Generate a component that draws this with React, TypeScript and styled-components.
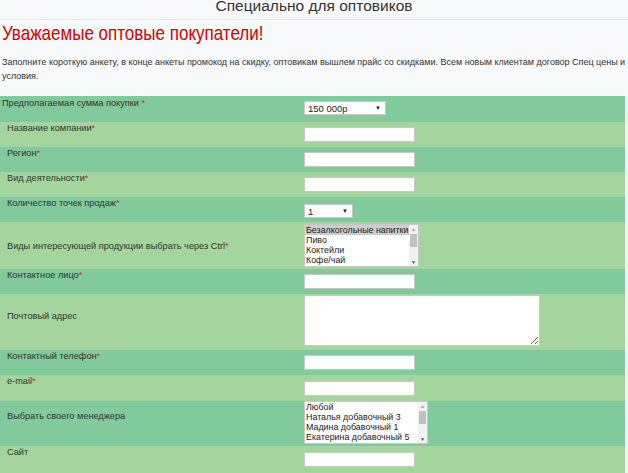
import React from 'react';
import styled, { createGlobalStyle } from 'styled-components';

const GlobalStyle = createGlobalStyle`
  html, body {
    margin: 0;
    padding: 0;
    background: #f8f9fa;
    font-family: 'Liberation Sans', Arial, sans-serif;
    color: #333;
    overflow: hidden;
  }
`;

const Page = styled.div`
  width: 628px;
  height: 473px;
  overflow: hidden;
`;

const TopBar = styled.div`
  height: 19px;
  border-bottom: 1px solid #e6e8ea;
  text-align: center;
  overflow: hidden;
`;

const TopTitle = styled.div`
  margin-top: -2px;
  font-size: 15.5px;
  line-height: 16px;
  color: #333;
`;

// narrow red headline, squeezed like the reference's condensed face
const Heading = styled.h1`
  margin: 1px 0 0 2px;
  font-size: 21px;
  line-height: 24px;
  font-weight: normal;
  color: #d40000;
  white-space: nowrap;
  transform: scaleX(0.81);
  transform-origin: left center;
`;

const Intro = styled.p`
  margin: 10px 0 0 2px;
  font-size: 9px;
  line-height: 14px;
  color: #333;
`;

const FormTable = styled.div`
  margin-top: 13px;
  width: 625px;
  display: flex;
  flex-direction: column;
`;

const Row = styled.div<{ $tone: 'dark' | 'light'; $h: number }>`
  height: ${(p) => p.$h}px;
  display: grid;
  grid-template-columns: 304px 1fr;
  background: ${(p) => (p.$tone === 'dark' ? '#80ca9c' : '#a3d59c')};
`;

const Label = styled.div<{ $top?: number; $indent: number }>`
  padding: ${(p) => p.$top ?? 0}px 0 0 ${(p) => p.$indent}px;
  font-size: 9.2px;
  line-height: 12px;
  color: #333;
`;

const Star = styled.span`
  color: #e02020;
`;

const Field = styled.div<{ $top: number }>`
  padding-top: ${(p) => p.$top}px;
  min-width: 0;
`;

const TextInput = styled.input`
  display: block;
  box-sizing: border-box;
  width: 111px;
  height: 15px;
  margin: 0;
  padding: 0 2px;
  border: 1px solid #c8c8c8;
  background: #fff;
  font: 10px 'Liberation Sans', Arial, sans-serif;
`;

const TextArea = styled.textarea`
  display: block;
  box-sizing: border-box;
  width: 236px;
  height: 51px;
  margin: 0;
  padding: 2px;
  border: 1px solid #c8c8c8;
  background: #fff;
  font: 10px 'Liberation Sans', Arial, sans-serif;
`;

const SelectBox = styled.div<{ $w: number }>`
  box-sizing: border-box;
  width: ${(p) => p.$w}px;
  height: 14px;
  display: flex;
  align-items: center;
  justify-content: space-between;
  padding: 0 4px 0 3px;
  border: 1px solid #c8c8c8;
  background: #fff;
  font-size: 9.5px;
  color: #222;
`;

const Arrow = styled.span`
  font-size: 6px;
  line-height: 6px;
  color: #222;
`;

const ListBox = styled.div<{ $w: number }>`
  box-sizing: border-box;
  width: ${(p) => p.$w}px;
  height: 43px;
  display: flex;
  border: 1px solid #c8c8c8;
  background: #fff;
  overflow: hidden;
`;

const Options = styled.div`
  flex: 1;
  min-width: 0;
  display: flex;
  flex-direction: column;
`;

const Option = styled.div<{ $selected?: boolean }>`
  height: 10px;
  line-height: 10px;
  padding-left: 1px;
  font-size: 8.9px;
  white-space: nowrap;
  overflow: hidden;
  color: #222;
  background: ${(p) => (p.$selected ? '#cdcdcd' : 'transparent')};
`;

const ScrollBar = styled.div`
  flex: none;
  width: 9px;
  display: flex;
  flex-direction: column;
  align-items: center;
  background: #f1f1f1;
`;

const ScrollBtn = styled.div`
  height: 8px;
  font-size: 5px;
  line-height: 8px;
  color: #a0a0a0;
  &:last-child {
    color: #505050;
  }
`;

const Thumb = styled.div`
  width: 7px;
  height: 13px;
  margin-top: 1px;
  background: #c1c1c1;
`;

const Track = styled.div`
  flex: 1;
`;

type List = { w: number; items: string[]; selected?: number };

const Listbox: React.FC<List> = ({ w, items, selected }) => (
  <ListBox $w={w}>
    <Options>
      {items.map((it, i) => (
        <Option key={it} $selected={i === selected}>
          {it}
        </Option>
      ))}
    </Options>
    <ScrollBar>
      <ScrollBtn>▲</ScrollBtn>
      <Thumb />
      <Track />
      <ScrollBtn>▼</ScrollBtn>
    </ScrollBar>
  </ListBox>
);

const App: React.FC = () => {
  return (
    <Page>
      <GlobalStyle />
      <TopBar>
        <TopTitle>Специально для оптовиков</TopTitle>
      </TopBar>
      <Heading>Уважаемые оптовые покупатели!</Heading>
      <Intro>
        Заполните короткую анкету, в конце анкеты промокод на скидку, оптовикам вышлем прайс со
        скидками. Всем новым клиентам договор Спец цены и условия.
      </Intro>
      <FormTable>
        <Row $tone="dark" $h={26}>
          <Label $indent={2} $top={1}>
            Предполагаемая сумма покупки <Star>*</Star>
          </Label>
          <Field $top={5}>
            <SelectBox $w={82}>
              150 000р<Arrow>▼</Arrow>
            </SelectBox>
          </Field>
        </Row>
        <Row $tone="light" $h={25}>
          <Label $indent={7}>
            Название компании<Star>*</Star>
          </Label>
          <Field $top={5}>
            <TextInput />
          </Field>
        </Row>
        <Row $tone="dark" $h={25}>
          <Label $indent={7}>
            Регион<Star>*</Star>
          </Label>
          <Field $top={5}>
            <TextInput />
          </Field>
        </Row>
        <Row $tone="light" $h={25}>
          <Label $indent={7}>
            Вид деятельности<Star>*</Star>
          </Label>
          <Field $top={5}>
            <TextInput />
          </Field>
        </Row>
        <Row $tone="dark" $h={25}>
          <Label $indent={7}>
            Количество точек продаж<Star>*</Star>
          </Label>
          <Field $top={7}>
            <SelectBox $w={49}>
              1<Arrow>▼</Arrow>
            </SelectBox>
          </Field>
        </Row>
        <Row $tone="light" $h={47}>
          <Label $indent={7} $top={18}>
            Виды интересующей продукции выбрать через Ctrl<Star>*</Star>
          </Label>
          <Field $top={2}>
            <Listbox
              w={115}
              selected={0}
              items={['Безалкогольные напитки', 'Пиво', 'Коктейли', 'Кофе/чай']}
            />
          </Field>
        </Row>
        <Row $tone="dark" $h={25}>
          <Label $indent={7}>
            Контактное лицо<Star>*</Star>
          </Label>
          <Field $top={5}>
            <TextInput />
          </Field>
        </Row>
        <Row $tone="light" $h={56}>
          <Label $indent={7} $top={16}>
            Почтовый адрес
          </Label>
          <Field $top={1}>
            <TextArea />
          </Field>
        </Row>
        <Row $tone="dark" $h={25}>
          <Label $indent={7}>
            Контактный телефон<Star>*</Star>
          </Label>
          <Field $top={5}>
            <TextInput />
          </Field>
        </Row>
        <Row $tone="light" $h={26}>
          <Label $indent={7}>
            e-mail<Star>*</Star>
          </Label>
          <Field $top={6}>
            <TextInput />
          </Field>
        </Row>
        <Row $tone="dark" $h={45}>
          <Label $indent={7} $top={9}>
            Выбрать своего менеджера
          </Label>
          <Field $top={0}>
            <Listbox
              w={124}
              items={['Любой', 'Наталья добавочный 3', 'Мадина добавочный 1', 'Екатерина добавочный 5']}
            />
          </Field>
        </Row>
        <Row $tone="light" $h={27}>
          <Label $indent={7}>Сайт</Label>
          <Field $top={6}>
            <TextInput />
          </Field>
        </Row>
      </FormTable>
    </Page>
  );
};

export default App;
